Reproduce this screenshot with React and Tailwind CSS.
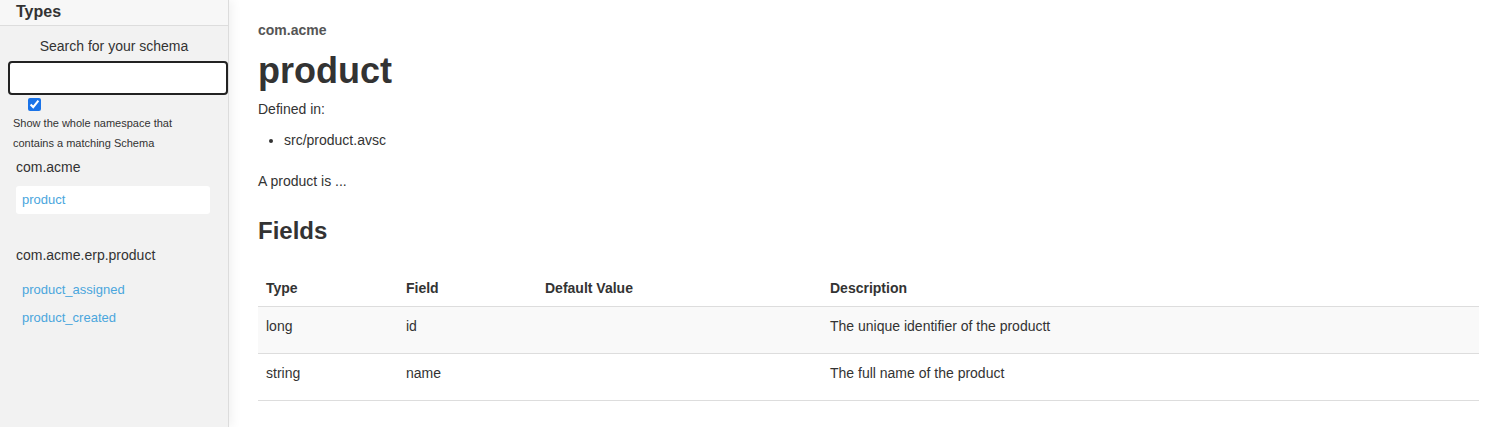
import React, { useState } from 'react';

const namespaces = [
  { name: 'com.acme', schemas: ['product'], active: 'product' },
  { name: 'com.acme.erp.product', schemas: ['product_assigned', 'product_created'] },
];

const fields = [
  { type: 'long', field: 'id', def: '', desc: 'The unique identifier of the productt' },
  { type: 'string', field: 'name', def: '', desc: 'The full name of the product' },
];

const App = () => {
  const [query, setQuery] = useState('');
  const [whole, setWhole] = useState(true);

  return (
    <div className="flex min-h-[427px] bg-white text-[#333] font-['Liberation_Sans',Arial,sans-serif]">
      {/* Sidebar */}
      <aside className="w-[229px] shrink-0 bg-[#f2f2f2] border-r border-[#dcdcdc] shadow-[3px_0_10px_rgba(0,0,0,0.06)]">
        <div className="h-[26px] bg-[#f7f7f7] border-b border-[#dddddd] pl-[16px] text-[16px] font-bold leading-[24px]">
          Types
        </div>
        <div className="pt-[11px] text-center text-[14px] leading-[18px]">Search for your schema</div>
        <div className="px-[8px] pt-[6px]">
          <input
            type="text"
            value={query}
            onChange={(e) => setQuery(e.target.value)}
            className="block w-[220px] h-[34px] bg-white border-2 border-[#222] rounded-[4px] outline-none px-2"
          />
        </div>
        <div className="pl-[28px] pt-[3px] h-[14px] flex items-start">
          <input
            type="checkbox"
            checked={whole}
            onChange={(e) => setWhole(e.target.checked)}
            className="w-[13px] h-[13px] m-0 accent-[#1a73e8]"
          />
        </div>
        <p className="pl-[13px] pt-[4px] text-[11px] leading-[20px]">
          Show the whole namespace that
          <br />
          contains a matching Schema
        </p>
        <div className="px-[16px] pt-[4px]">
          {namespaces.map((ns, i) => (
            <div key={ns.name} className={i > 0 ? 'pt-[31px]' : ''}>
              <div className="text-[14px] leading-[20px]">{ns.name}</div>
              <ul className={i > 0 ? 'pt-[11px]' : 'pt-[9px]'}>
                {ns.schemas.map((s) => (
                  <li key={s}>
                    <a
                      href="#"
                      className={`block w-[194px] h-[28px] px-[6px] text-[13px] leading-[28px] font-light text-[#4aa6dd] rounded-[3px] ${
                        ns.active === s ? 'bg-white' : ''
                      }`}
                    >
                      {s}
                    </a>
                  </li>
                ))}
              </ul>
            </div>
          ))}
        </div>
      </aside>

      {/* Main content */}
      <main className="flex-1 pl-[29px] pr-[21px] pt-[21px]">
        <div className="text-[14px] font-bold text-[#555] leading-[18px]">com.acme</div>
        <h1 className="text-[36px] font-bold leading-[40px] mt-[12px]">product</h1>
        <p className="text-[14px] leading-[18px] mt-[9px]">Defined in:</p>
        <ul className="list-disc pl-[26px] mt-[13px] text-[14px] leading-[18px]">
          <li>src/product.avsc</li>
        </ul>
        <p className="text-[14px] leading-[18px] mt-[23px]">A product is ...</p>
        <h2 className="text-[24px] font-bold leading-[30px] mt-[26px]">Fields</h2>

        <table className="w-full mt-[25px] text-[14px] border-collapse text-left">
          <thead>
            <tr className="border-b border-[#dddddd]">
              <th className="w-[140px] px-[8px] h-[35px] font-bold align-middle">Type</th>
              <th className="w-[139px] px-[8px] font-bold">Field</th>
              <th className="w-[285px] px-[8px] font-bold">Default Value</th>
              <th className="px-[8px] font-bold">Description</th>
            </tr>
          </thead>
          <tbody>
            {fields.map((f, i) => (
              <tr key={f.field} className={`border-b border-[#dddddd] ${i % 2 === 0 ? 'bg-[#f9f9f9]' : ''}`}>
                <td className="px-[8px] h-[47px] align-top pt-[9px]">{f.type}</td>
                <td className="px-[8px] align-top pt-[9px]">{f.field}</td>
                <td className="px-[8px] align-top pt-[9px]">{f.def}</td>
                <td className="px-[8px] align-top pt-[9px]">{f.desc}</td>
              </tr>
            ))}
          </tbody>
        </table>
      </main>
    </div>
  );
};

export default App;
